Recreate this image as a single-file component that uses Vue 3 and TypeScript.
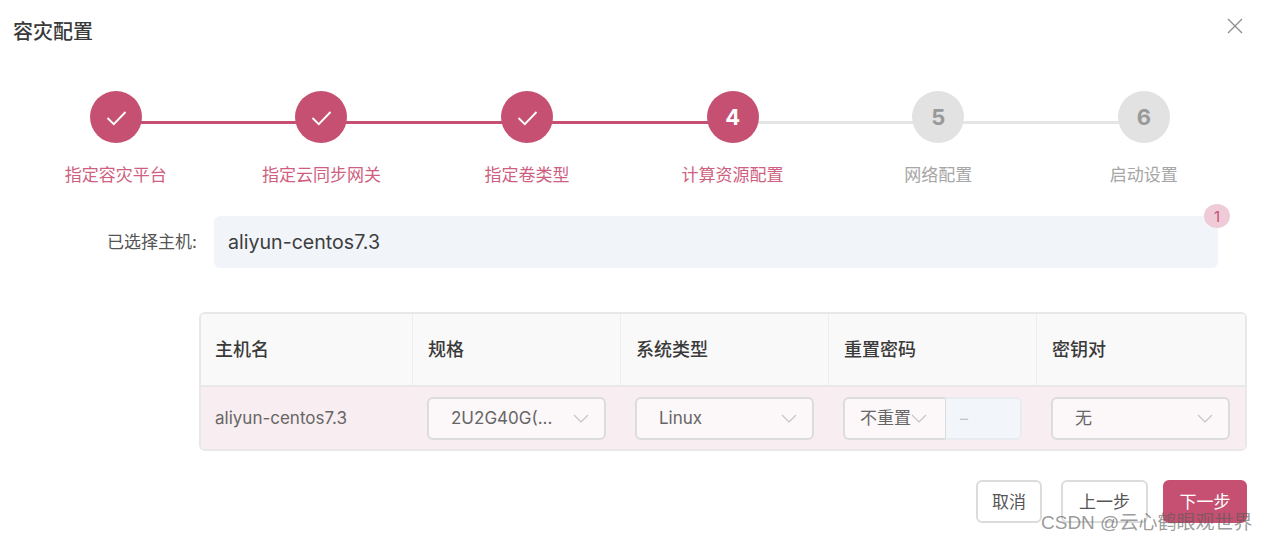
<script setup lang="ts">
interface Step { label: string; mark: string; state: 'done' | 'active' | 'todo' }
const steps: Step[] = [
  { label: '指定容灾平台', mark: '', state: 'done' },
  { label: '指定云同步网关', mark: '', state: 'done' },
  { label: '指定卷类型', mark: '', state: 'done' },
  { label: '计算资源配置', mark: '4', state: 'active' },
  { label: '网络配置', mark: '5', state: 'todo' },
  { label: '启动设置', mark: '6', state: 'todo' }
]
const columns = ['主机名', '规格', '系统类型', '重置密码', '密钥对']
</script>

<template>
  <div class="dialog">
    <header class="head">
      <h1 class="title">容灾配置</h1>
      <svg class="close" width="16" height="16" viewBox="0 0 16 16" fill="none" stroke="#8c8c8c" stroke-width="1.3">
        <path d="M1 1l14 14M15 1L1 15" />
      </svg>
    </header>

    <ol class="steps">
      <li v-for="s in steps" :key="s.label" class="step" :class="s.state">
        <span class="circle">
          <svg v-if="s.state === 'done'" width="24" height="24" viewBox="0 0 24 24" fill="none" stroke="#fff" stroke-width="1.9">
            <path d="M3.5 13l6.3 6.2L21.5 7" />
          </svg>
          <template v-else>{{ s.mark }}</template>
        </span>
        <span class="step-label">{{ s.label }}</span>
      </li>
    </ol>

    <div class="picked">
      <span class="picked-label">已选择主机:</span>
      <div class="picked-box">
        aliyun-centos7.3
        <span class="badge">1</span>
      </div>
    </div>

    <div class="table">
      <div class="row head-row">
        <div v-for="c in columns" :key="c" class="cell">{{ c }}</div>
      </div>
      <div class="row body-row">
        <div class="cell name">aliyun-centos7.3</div>
        <div class="cell">
          <div class="select">
            <span class="value">2U2G40G(...</span>
            <svg class="chev" width="16" height="9" viewBox="0 0 16 9" fill="none" stroke="#c4c4c4" stroke-width="1.2"><path d="M1 1l7 7 7-7" /></svg>
          </div>
        </div>
        <div class="cell">
          <div class="select">
            <span class="value">Linux</span>
            <svg class="chev" width="16" height="9" viewBox="0 0 16 9" fill="none" stroke="#c4c4c4" stroke-width="1.2"><path d="M1 1l7 7 7-7" /></svg>
          </div>
        </div>
        <div class="cell">
          <div class="combo">
            <div class="select left">
              <span class="value">不重置</span>
              <svg class="chev" width="16" height="9" viewBox="0 0 16 9" fill="none" stroke="#c4c4c4" stroke-width="1.2"><path d="M1 1l7 7 7-7" /></svg>
            </div>
            <div class="dash">–</div>
          </div>
        </div>
        <div class="cell">
          <div class="select">
            <span class="value">无</span>
            <svg class="chev" width="16" height="9" viewBox="0 0 16 9" fill="none" stroke="#c4c4c4" stroke-width="1.2"><path d="M1 1l7 7 7-7" /></svg>
          </div>
        </div>
      </div>
    </div>

    <footer class="foot">
      <button class="btn cancel">取消</button>
      <button class="btn prev">上一步</button>
      <button class="btn next">下一步</button>
    </footer>

    <span class="watermark">CSDN @云心鹤眼观世界</span>
  </div>
</template>

<style>
html, body { background: #fff; }
</style>

<style scoped>
.dialog {
  position: relative;
  width: 1268px;
  height: 541px;
  box-sizing: border-box;
  overflow: hidden;
  padding: 18px 21px 0 13px;
  background: #fff;
  font-family: Inter, "Noto Sans CJK SC", sans-serif;
  color: #333;
}
.head { display: flex; justify-content: space-between; align-items: flex-start; height: 73px; }
.title { margin: 0; font-size: 20px; line-height: 28px; font-weight: 500; color: #3a3a3a; }
.close { margin-right: 4px; }
.steps { display: grid; grid-template-columns: repeat(6, 1fr); width: 1233.6px; margin: 0; padding: 0; list-style: none; }
.step { position: relative; display: flex; flex-direction: column; align-items: center; }
.step:not(:last-child)::after {
  content: "";
  position: absolute;
  left: 50%;
  width: 100%;
  top: 30px;
  height: 3px;
  background: #e5e5e5;
}
.step.done::after { background: #c55072; }
.circle {
  position: relative;
  z-index: 1;
  width: 52px;
  height: 52px;
  border-radius: 50%;
  display: flex;
  align-items: center;
  justify-content: center;
  font-size: 22px;
  font-weight: 700;
  background: #c55072;
  color: #fff;
}
.todo .circle { background: #e2e2e2; color: #999; }
.step-label { margin-top: 20px; font-size: 17px; line-height: 24px; color: #cf5f80; }
.todo .step-label { color: #a6a6a6; }

.picked { display: flex; align-items: center; margin-top: 29px; }
.picked-label { width: 184px; text-align: right; font-size: 17px; line-height: 22px; color: #555; }
.picked-box {
  position: relative;
  margin-left: 17px;
  width: 1004px;
  height: 52px;
  box-sizing: border-box;
  padding-left: 14px;
  display: flex;
  align-items: center;
  background: #f1f4f9;
  border-radius: 6px;
  font-size: 19.6px;
  color: #3d3d3d;
}
.badge {
  position: absolute;
  top: -12px;
  right: -12px;
  width: 26px;
  height: 24px;
  border-radius: 50%;
  display: flex;
  align-items: center;
  justify-content: center;
  background: #eecbd7;
  font-size: 15px;
  color: #c55072;
}

.table {
  margin: 44px 0 0 186px;
  width: 1048px;
  height: 139px;
  box-sizing: border-box;
  border: 2px solid #e8e8e8;
  border-radius: 6px;
  overflow: hidden;
}
.row { display: grid; grid-template-columns: 212px 208px 208px 208px 1fr; }
.head-row { height: 71px; background: #f9f9f9; border-bottom: 2px solid #e8e8e8; }
.head-row .cell { display: flex; align-items: center; padding-left: 14px; font-size: 18px; line-height: 22px; font-weight: 500; color: #3a3a3a; border-right: 1px solid #eee; }
.head-row .cell:nth-child(n + 2) { padding-left: 15px; }
.head-row .cell:last-child { border-right: 0; }
.body-row { height: 62px; background: #f8edf0; }
.body-row .cell { display: flex; align-items: center; padding-left: 14px; box-sizing: border-box; }
.body-row .cell.name { font-size: 17px; color: #666; padding-left: 14px; }
.select {
  width: 179px;
  height: 43px;
  box-sizing: border-box;
  display: flex;
  align-items: center;
  justify-content: space-between;
  padding: 0 15px 0 22px;
  background: #fcf7f9;
  border: 2px solid #dcdcdc;
  border-radius: 6px;
  font-size: 17px;
  color: #666;
}
.value { line-height: 20px; }
.combo { display: flex; width: 179px; }
.select.left {
  width: 102px;
  padding: 0 18px 0 15px;
  border-right: 0;
  border-radius: 6px 0 0 6px;
}
.select.left .value { white-space: nowrap; }
.select.left .chev { flex: none; }
.dash {
  width: 77px;
  height: 43px;
  box-sizing: border-box;
  padding-left: 14px;
  display: flex;
  align-items: center;
  background: #f2f5f9;
  border: 2px solid #e8ebf0;
  border-left: 1px solid #dcdcdc;
  border-radius: 0 6px 6px 0;
  color: #c4c4c4;
  font-size: 16px;
}

.foot { display: flex; justify-content: flex-end; margin: 29px 0 0; width: 1234px; }
.btn {
  height: 43px;
  box-sizing: border-box;
  border: 2px solid #dcdcdc;
  border-radius: 6px;
  background: #fff;
  font: inherit;
  font-size: 17px;
  line-height: 20px;
  color: #555;
  padding: 0;
}
.cancel { width: 66px; }
.prev { width: 87px; margin-left: 19px; }
.next { width: 84px; margin-left: 15px; background: #c55072; border-color: #c55072; color: #fff; }
.watermark {
  position: absolute;
  left: 1041px;
  top: 510px;
  font-size: 19px;
  line-height: 26px;
  white-space: nowrap;
  color: rgba(90, 90, 90, 0.62);
  font-family: "Liberation Sans", "Noto Sans CJK SC", sans-serif;
}
</style>
